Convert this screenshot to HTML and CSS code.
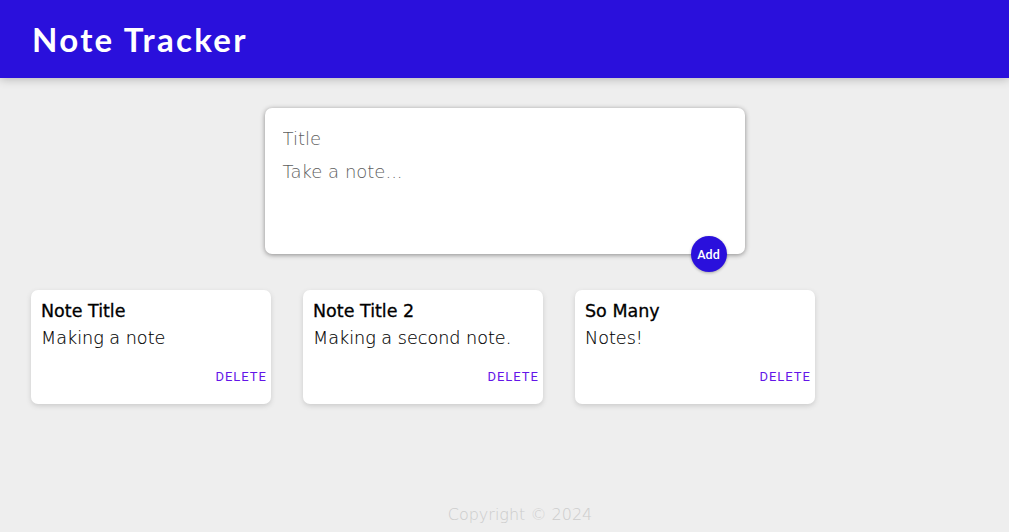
FILE: index.html
```html
<!DOCTYPE html>
<html>
<head>
<meta charset="utf-8">
<link rel="stylesheet" href="styles.css">
</head>
<body>
<header class="app-header"><h1 class="app-title">Note Tracker</h1></header>
<main class="content">
  <form class="create-note">
    <input class="create-title" type="text" placeholder="Title">
    <textarea class="create-body" placeholder="Take a note..."></textarea>
    <button class="add-btn" type="button">Add</button>
  </form>
  <section class="notes">
    <div class="note">
      <h2 class="note-title">Note Title</h2>
      <p class="note-text">Making a note</p>
      <div class="note-actions"><button class="delete-btn" type="button">DELETE</button></div>
    </div>
    <div class="note">
      <h2 class="note-title">Note Title 2</h2>
      <p class="note-text">Making a second note.</p>
      <div class="note-actions"><button class="delete-btn" type="button">DELETE</button></div>
    </div>
    <div class="note">
      <h2 class="note-title">So Many</h2>
      <p class="note-text">Notes!</p>
      <div class="note-actions"><button class="delete-btn" type="button">DELETE</button></div>
    </div>
  </section>
</main>
<footer class="app-footer"><p class="copyright">Copyright © 2024</p></footer>
</body>
</html>
```
FILE: styles.css
```css
* { box-sizing: border-box; }
html, body { margin: 0; height: 100%; }
body {
  background: #eeeeee;
  font-family: "DejaVu Sans", "Open Sans", sans-serif;
  display: flex;
  flex-direction: column;
  min-height: 100vh;
  overflow: hidden;
}
.app-header {
  background: #2a10dc;
  padding: 16px 32px;
  height: 78px;
  box-shadow: 0 0 10px 0 rgba(0,0,0,0.3);
}
.app-title {
  margin: 0;
  color: #fff;
  font-family: "Lato", sans-serif;
  font-weight: 700;
  font-size: 33px;
  line-height: 46px;
  letter-spacing: 2.3px;
}
.content {
  flex: 1;
  padding: 0 16px;
}
.create-note {
  position: relative;
  width: 480px;
  height: 146px;
  margin: 30px auto 20px auto;
  background: #fff;
  padding: 15px;
  border-radius: 7px;
  box-shadow: 0 1px 5px rgb(138,137,137);
}
.create-title, .create-body {
  display: block;
  width: 100%;
  border: none;
  outline: none;
  padding: 4px 4px 4px 3px;
  font-family: inherit;
  font-size: 18px;
  color: #333;
  resize: none;
  background: transparent;
}
.create-title { height: 31px; }
.create-body { height: 84px; line-height: 24px; padding-top: 6px; }
.create-title::placeholder, .create-body::placeholder { color: #5e5e5e; font-weight: 300; }
.add-btn {
  position: absolute;
  right: 18px;
  bottom: -18px;
  width: 36px;
  height: 36px;
  border: none;
  border-radius: 50%;
  background: #2a10dc;
  color: #fff;
  font-family: "Roboto", sans-serif;
  font-size: 12.5px;
  font-weight: 500;
  padding: 0;
  box-shadow: 0 1px 3px rgba(0,0,0,0.3);
}
.notes {
  display: flex;
  gap: 32px;
  padding-left: 15px;
  margin-top: 36px;
}
.note {
  width: 240px;
  background: #fff;
  border-radius: 7px;
  box-shadow: 0 2px 5px #ccc;
  padding: 10px;
}
.note-title {
  margin: 0 0 6px 0;
  font-size: 17.5px;
  font-weight: 400;
  line-height: 22px;
  color: #000;
  -webkit-text-stroke: 0.3px #000;
}
.note-text {
  margin: 0 0 10px 0;
  font-size: 17.6px;
  font-weight: 300;
  line-height: 21px;
  color: #000;
  -webkit-text-stroke: 0.15px #000;
}
.note-actions {
  display: flex;
  justify-content: flex-end;
  margin-right: -5px;
  height: 35px;
  align-items: center;
}
.delete-btn {
  border: none;
  background: none;
  padding: 0;
  font-family: "Roboto", sans-serif;
  font-size: 13px;
  letter-spacing: 1px;
  margin-right: -1px;
  color: #6415e8;
}
.app-footer {
  height: 40px;
  text-align: center;
  padding-left: 31px;
}
.copyright {
  margin: 0;
  color: #cccccc;
  font-size: 16px;
  line-height: 46px;
  font-weight: 300;
}
```
